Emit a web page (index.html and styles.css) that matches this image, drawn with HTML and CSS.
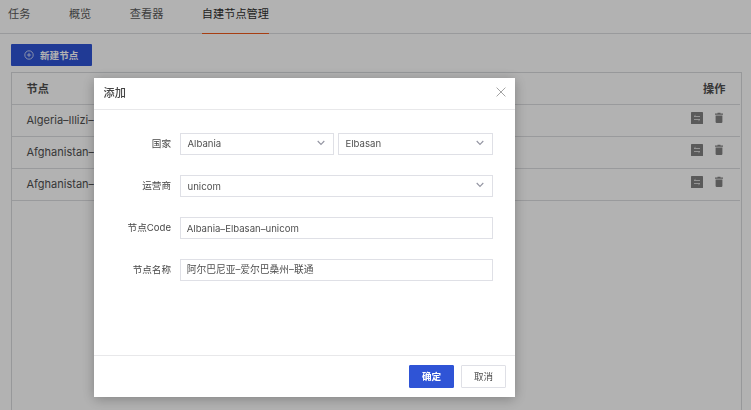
FILE: index.html
```html
<!DOCTYPE html>
<html lang="zh-CN">
<head>
<meta charset="utf-8">
<title>自建节点管理</title>
<link rel="stylesheet" href="styles.css">
</head>
<body>
<svg width="0" height="0" class="sprite" aria-hidden="true">
  <symbol id="edit" viewBox="0 0 12 12">
    <rect width="12" height="12" rx=".6" fill="#828282"/>
    <path d="M3 4.5h6M3 7.5h6M4.5 3.3L3 4.5M7.5 8.7L9 7.5" stroke="#dedede" stroke-width=".9" fill="none"/>
  </symbol>
  <symbol id="trash" viewBox="0 0 10 12">
    <path d="M1 2.1h8M3.5 1.3h3" stroke="#828282" stroke-width="1.1" fill="none"/>
    <path d="M1.6 3.4h6.8V10q0 1-1 1H2.6q-1 0-1-1z" fill="#828282"/>
  </symbol>
  <symbol id="chevron" viewBox="0 0 8 6">
    <path d="M.7 1L4 4.4 7.3 1" stroke="#9495a2" stroke-width="1.1" fill="none"/>
  </symbol>
</svg>
<main class="page">
  <nav class="tabs">
    <a class="tab">任务</a>
    <a class="tab">概览</a>
    <a class="tab">查看器</a>
    <a class="tab active">自建节点管理</a>
  </nav>
  <button class="create">
    <svg width="10" height="10" viewBox="0 0 10 10" fill="none" stroke="#fff" stroke-width=".7"><circle cx="5" cy="5" r="4.2"/><path d="M5 2.9v4.2M2.9 5h4.2"/></svg>
    <span>新建节点</span>
  </button>
  <section class="table">
    <div class="row head"><span>节点</span><span>操作</span></div>
    <div class="row"><span>Algeria–Illizi–</span><span class="actions"><svg width="12" height="12"><use href="#edit"/></svg><svg width="10" height="12"><use href="#trash"/></svg></span></div>
    <div class="row"><span>Afghanistan–</span><span class="actions"><svg width="12" height="12"><use href="#edit"/></svg><svg width="10" height="12"><use href="#trash"/></svg></span></div>
    <div class="row"><span>Afghanistan–</span><span class="actions"><svg width="12" height="12"><use href="#edit"/></svg><svg width="10" height="12"><use href="#trash"/></svg></span></div>
  </section>
</main>
<div class="overlay">
  <section class="dialog">
    <header class="dialog-head">
      <span>添加</span>
      <svg width="10" height="10" viewBox="0 0 10 10" stroke="#999" stroke-width=".9"><path d="M.6.6l8.8 8.8M9.4.6L.6 9.4"/></svg>
    </header>
    <form class="form">
      <div class="field"><label>国家</label>
        <div class="control half"><span>Albania</span><svg width="8" height="6"><use href="#chevron"/></svg></div>
        <div class="control"><span>Elbasan</span><svg width="8" height="6"><use href="#chevron"/></svg></div>
      </div>
      <div class="field"><label>运营商</label>
        <div class="control low"><span>unicom</span><svg width="8" height="6"><use href="#chevron"/></svg></div>
      </div>
      <div class="field"><label>节点Code</label>
        <div class="control input low"><span>Albania–Elbasan–unicom</span></div>
      </div>
      <div class="field"><label>节点名称</label>
        <div class="control input name"><span>阿尔巴尼亚–爱尔巴桑州–联通</span></div>
      </div>
    </form>
    <footer class="dialog-foot">
      <button class="btn primary">确定</button>
      <button class="btn">取消</button>
    </footer>
  </section>
</div>
</body>
</html>
```
FILE: styles.css
```css
* { box-sizing: border-box; }
body {
  margin: 0;
  height: 410px;
  overflow: hidden;
  background: #fff;
  color: #505050;
  font-family: Inter, "Noto Sans CJK SC", sans-serif;
  font-size: 11px;
}
svg { display: block; flex: none; }
.sprite { position: absolute; }
button { font-family: inherit; margin: 0; padding: 0; }
.page { height: 410px; display: flex; flex-direction: column; }
.tabs {
  display: flex;
  gap: 38.5px;
  flex: none;
  height: 34px;
  padding-left: 8px;
  border-bottom: 1px solid #dcdde0;
  font-size: 11.2px;
}
.tab { height: 34px; line-height: 29px; color: #5a5a5a; }
.tab.active { color: #303030; border-bottom: 1px solid #f05a1a; }
.create {
  display: flex;
  align-items: center;
  gap: 6px;
  flex: none;
  width: 81px;
  height: 22px;
  margin: 10px 0 6px 11px;
  padding-left: 13px;
  border: 0;
  border-radius: 1px;
  background: #2f54d6;
  color: #fff;
  font-size: 9.6px;
  font-weight: 700;
}
.create span { margin-top: -1px; }
.table {
  flex: 1;
  margin: 0 9px 0 11px;
  padding-right: 1px;
  border: 1px solid #d8dadd;
  border-bottom: 0;
}
.row {
  display: flex;
  justify-content: space-between;
  height: 32px;
  padding: 0 14.5px;
  border-bottom: 1px solid #dcdde0;
  line-height: 30px;
}
.row.head { line-height: 32px; font-size: 11.2px; font-weight: 700; color: #505050; }
.actions { display: flex; gap: 11px; padding: 7px 1.5px 0 0; }
.overlay {
  position: fixed;
  inset: 0;
  display: flex;
  align-items: flex-start;
  padding: 78px 0 0 94px;
  background: rgba(0, 0, 0, .3);
}
.dialog {
  display: flex;
  flex-direction: column;
  width: 421px;
  height: 319px;
  background: #fff;
  box-shadow: 0 2px 12px rgba(0, 0, 0, .28);
}
.dialog-head {
  display: flex;
  justify-content: space-between;
  align-items: center;
  height: 32px;
  padding: 0 9.5px 3px 9.5px;
  border-bottom: 1px solid #e8e8ea;
  font-size: 11.2px;
  font-weight: 500;
  color: #444;
}
.form {
  display: flex;
  flex: 1;
  flex-direction: column;
  gap: 20px;
  padding: 23px 22px 0 0;
  font-size: 9.6px;
}
.field { display: flex; gap: 4px; height: 22px; }
.field label { width: 77px; margin-right: 5px; line-height: 21px; text-align: right; white-space: nowrap; color: #484848; }
.control {
  display: flex;
  flex: 1;
  justify-content: space-between;
  height: 22px;
  padding: 0 8px 0 6.5px;
  border: 1px solid #dfe0e6;
  line-height: 20px;
}
.control.half { flex: 0 0 154px; }
.control.low span { line-height: 21.5px; }
.control.input { padding-left: 5.7px; }
.control.name { font-size: 9.75px; }
.control svg { margin-top: 6px; }
.dialog-foot {
  display: flex;
  justify-content: flex-end;
  gap: 7px;
  height: 42px;
  padding: 9px 9px 0 0;
  border-top: 1px solid #e8e8ea;
}
.btn {
  width: 45px;
  height: 23px;
  padding: 0 0 2px;
  border: 1px solid #dfe0e6;
  border-radius: 1px;
  background: #fff;
  color: #505050;
  font-size: 9.6px;
}
.btn.primary { border-color: #2f54d6; background: #2f54d6; color: #fff; font-weight: 700; }
```
